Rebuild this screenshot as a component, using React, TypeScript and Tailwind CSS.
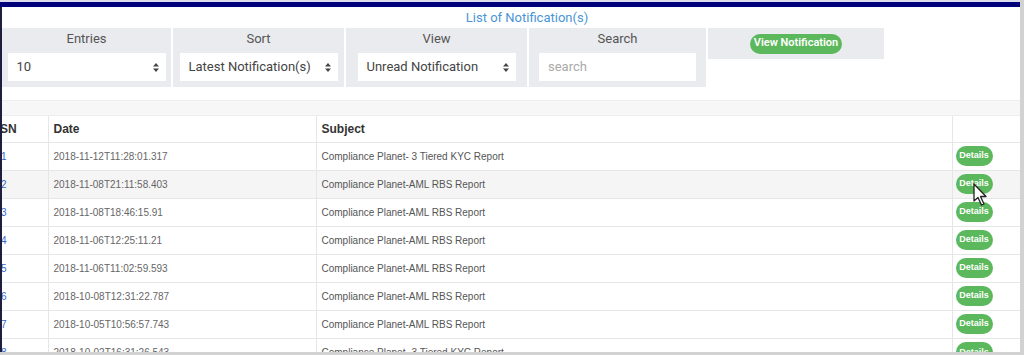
import React from 'react'

const rows = [
  ['1', '2018-11-12T11:28:01.317', 'Compliance Planet- 3 Tiered KYC Report'],
  ['2', '2018-11-08T21:11:58.403', 'Compliance Planet-AML RBS Report'],
  ['3', '2018-11-08T18:46:15.91', 'Compliance Planet-AML RBS Report'],
  ['4', '2018-11-06T12:25:11.21', 'Compliance Planet-AML RBS Report'],
  ['5', '2018-11-06T11:02:59.593', 'Compliance Planet-AML RBS Report'],
  ['6', '2018-10-08T12:31:22.787', 'Compliance Planet-AML RBS Report'],
  ['7', '2018-10-05T10:56:57.743', 'Compliance Planet-AML RBS Report'],
  ['8', '2018-10-02T16:31:26.543', 'Compliance Planet- 3 Tiered KYC Report'],
]

const SortIcon: React.FC = () => (
  <svg width="6" height="9" viewBox="0 0 6 9" className="shrink-0">
    <path d="M3 0 L6 3.5 L0 3.5 Z" fill="#444" />
    <path d="M3 9 L6 5.5 L0 5.5 Z" fill="#444" />
  </svg>
)

const FakeSelect: React.FC<{ value: string }> = ({ value }) => (
  <div className="flex h-[28px] w-[158px] items-center justify-between bg-white pl-[9px] pr-[7px] text-[13px] text-[#444]">
    <span>{value}</span>
    <SortIcon />
  </div>
)

const FilterPanel: React.FC<{ label: string; width: string; children: React.ReactNode }> = ({
  label,
  width,
  children,
}) => (
  <div className={`flex h-[59px] flex-col items-center bg-[#e9ebee] pt-[3px] ${width}`}>
    <span className="h-[16px] text-[13px] leading-[16px] text-[#555]">{label}</span>
    <div className="mt-[6px]">{children}</div>
  </div>
)

const App: React.FC = () => {
  return (
    <div className="relative h-[355px] w-[1024px] overflow-hidden bg-[#d2d2d2] font-['Roboto',sans-serif]">
      <div className="flex h-[352px] w-[1020px] flex-col overflow-hidden bg-white">
        <div className="h-[2px] bg-[#dcdcec]" />
        <div className="h-[5px] bg-[#00007a]" />

        <div className="flex flex-1 flex-col overflow-hidden border-l-2 border-[#1e1e40]">
          <div className="flex h-[21px] shrink-0 items-center justify-center pl-[32px] text-[13px] text-[#4a95d6]">
            List of Notification(s)
          </div>

          <div className="flex shrink-0 items-start gap-[2px]">
            <FilterPanel label="Entries" width="w-[169px]">
              <FakeSelect value="10" />
            </FilterPanel>
            <FilterPanel label="Sort" width="w-[171px]">
              <FakeSelect value="Latest Notification(s)" />
            </FilterPanel>
            <FilterPanel label="View" width="w-[181px]">
              <FakeSelect value="Unread Notification" />
            </FilterPanel>
            <FilterPanel label="Search" width="w-[177px]">
              <div className="flex h-[28px] w-[157px] items-center bg-white pl-[9px] text-[13px] text-[#aaa]">
                search
              </div>
            </FilterPanel>
            <div className="flex h-[31px] w-[176px] items-center justify-center bg-[#e9ebee]">
              <button className="h-[20px] w-[92px] rounded-full bg-[#5cb85c] text-[11px] font-semibold text-white">
                View Notification
              </button>
            </div>
          </div>

          <div className="h-[13px] shrink-0" />
          <div className="h-[16px] shrink-0 border-y border-[#eeeeee] bg-[#f7f7f7]" />

          <div className="overflow-hidden">
            <table className="-ml-[10px] w-[1028px] table-fixed border-collapse font-['Liberation_Sans',Arial,sans-serif]">
              <colgroup>
                <col className="w-[56px]" />
                <col className="w-[268px]" />
                <col className="w-[636px]" />
                <col className="w-[68px]" />
              </colgroup>
              <thead>
                <tr className="h-[26px] text-left text-[12px] font-bold text-[#333]">
                  <th className="border-r border-[#e6e6e6] pl-[8px]">SN</th>
                  <th className="border-r border-[#e6e6e6] pl-[5px]">Date</th>
                  <th className="border-r border-[#e6e6e6] pl-[5px]">Subject</th>
                  <th />
                </tr>
              </thead>
              <tbody>
                {rows.map(([sn, date, subject], i) => (
                  <tr
                    key={sn}
                    className={`h-[28px] border-t border-[#e6e6e6] text-[10px] ${i === 1 ? 'bg-[#f5f5f5]' : 'bg-white'}`}
                  >
                    <td className="border-r border-[#e6e6e6] pl-[9px] text-[#3366cc]">{sn}</td>
                    <td className="border-r border-[#e6e6e6] pl-[5px] text-[#666]">{date}</td>
                    <td className="border-r border-[#e6e6e6] pl-[5px] text-[#555]">{subject}</td>
                    <td className="pl-[3px]">
                      <button className="h-[20px] w-[37px] rounded-full bg-[#5cb85c] text-[9px] font-semibold text-white">
                        Details
                      </button>
                    </td>
                  </tr>
                ))}
              </tbody>
            </table>
          </div>
        </div>
      </div>

      {/* mouse pointer over the second Details button */}
      <svg
        className="absolute left-[973px] top-[183px]"
        width="15"
        height="24"
        viewBox="0 0 15 24"
      >
        <path
          d="M1 1 L1 18 L5 14.5 L8.5 22 L11 21 L7.5 13.5 L13 13.5 Z"
          fill="white"
          stroke="#222"
          strokeWidth="1.3"
          strokeLinejoin="round"
        />
      </svg>
    </div>
  )
}

export default App
